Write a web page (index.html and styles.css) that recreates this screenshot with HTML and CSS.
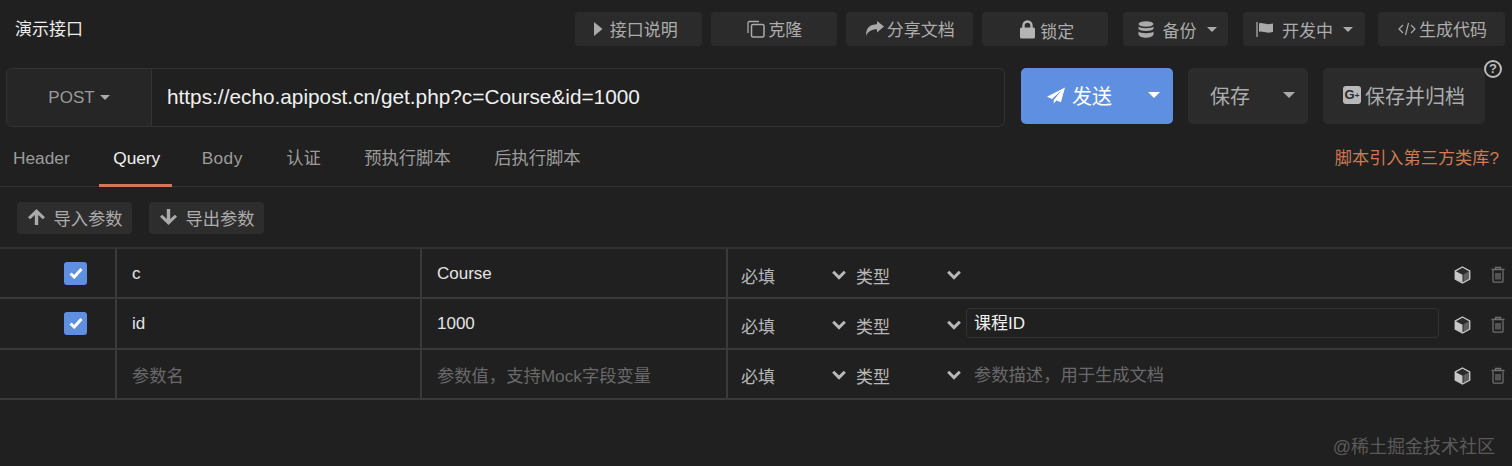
FILE: index.html
```html
<!DOCTYPE html>
<html lang="en">

<head>
    <title>演示接口</title>
    <meta charset="UTF-8">
    <meta name="viewport" content="width=device-width, initial-scale=1">
    <link rel="stylesheet" href="styles.css">
</head>

<body>
    <svg class="defs" width="0" height="0">
        <symbol id="chevron" viewBox="0 0 14 10"><path d="M1.200 1.800 7 7.600 12.800 1.800" fill="none" stroke="currentColor" stroke-width="3"/></symbol>
        <symbol id="cube" viewBox="0 0 17 18"><path d="M8.500 1 15.700 4.800V13.200L8.500 17 1.300 13.200V4.800Z" fill="#2a2a2a" stroke="#c8c8c8" stroke-width="1.400"/><path d="M1.800 5.200 8.500 8.700V16.500L1.800 12.900Z" fill="#c8c8c8"/><path d="M15.200 5.200 9.500 8.200V16L15.200 12.900Z" fill="#8a8a8a" opacity=".55"/></symbol>
        <symbol id="trash" viewBox="0 0 14 17"><path d="M2 4.500V15a1.200 1.200 0 0 0 1.200 1.200h7.600A1.200 1.200 0 0 0 12 15V4.500M.5 3.500h13M4.500 3.500V1.500h5v2M5 7v6.500M7 7v6.500M9 7v6.500" fill="none" stroke="#6e6e6e" stroke-width="1.300"/></symbol>
        <symbol id="check" viewBox="0 0 14 12"><path d="M1.500 6.500 5.200 10 12.500 2" fill="none" stroke="#fff" stroke-width="3"/></symbol>
    </svg>

    <header class="topbar">
        <div class="title">演示接口</div>
        <div class="actions">
            <button class="btn btn-top first">
                <svg class="icon" width="9" height="14" viewBox="0 0 9 14"><path d="M0 0 8.500 7 0 14Z" fill="#aaa"/></svg>
                接口说明
            </button>
            <button class="btn btn-top tight">
                <svg class="icon" width="18" height="18" viewBox="0 0 18 18"><path d="M12 1.500H2.500A1.500 1.500 0 0 0 1 3v10" fill="none" stroke="#aaa" stroke-width="1.300"/><rect x="4.500" y="4.500" width="12.500" height="12.500" rx="1.500" fill="none" stroke="#aaa" stroke-width="1.500"/></svg>
                克隆
            </button>
            <button class="btn btn-top tight">
                <svg class="icon" width="18" height="15" viewBox="0 0 18 15"><path d="M18 5.500 11 0V3.200C4 3.200 0 6.500 0 15 2 10.500 5.500 8.300 11 8.300V11.500Z" fill="#aaa"/></svg>
                分享文档
            </button>
            <button class="btn btn-top lock">
                <svg class="icon" width="15" height="19" viewBox="0 0 15 19"><path d="M3.500 8V5.500a4 4 0 0 1 8 0V8" fill="none" stroke="#b4b4b4" stroke-width="2.400"/><rect y="7.500" width="15" height="11" rx="1.500" fill="#b4b4b4"/></svg>
                <span class="low">锁定</span>
            </button>
            <button class="btn btn-menu spaced">
                <svg class="icon" width="16" height="17" viewBox="0 0 16 17"><ellipse cx="8" cy="3" rx="7.500" ry="2.800" fill="#aaa"/><path d="M.5 5.500C2 7.800 14 7.800 15.500 5.500V8C14 10.500 2 10.500.5 8ZM.5 10.500C2 12.800 14 12.800 15.500 10.500V13.500C14 17.800 2 17.800.5 13.500Z" fill="#aaa"/></svg>
                <span class="menu-label">备份</span>
                <i class="caret"></i>
            </button>
            <button class="btn btn-menu wide spaced">
                <svg class="icon" width="17" height="15" viewBox="0 0 17 15"><path d="M1 0V15" stroke="#aaa" stroke-width="1.300"/><path d="M3 1.500C6.500 0 9 3.500 17 1.500V10C9 12 6.500 8.500 3 10Z" fill="#aaa"/></svg>
                <span class="menu-label">开发中</span>
                <i class="caret"></i>
            </button>
            <button class="btn btn-top tight code">
                <svg class="icon" width="18" height="14" viewBox="0 0 18 14"><path d="M5 3 1 7l4 4M13 3l4 4-4 4M10.500 1 7.500 13" fill="none" stroke="#aaa" stroke-width="1.200"/></svg>
                生成代码
            </button>
        </div>
    </header>

    <section class="request">
        <div class="url-box">
            <div class="method">POST <i class="caret"></i></div>
            <div class="url">https://echo.apipost.cn/get.php?c=Course&amp;id=1000</div>
        </div>
        <button class="btn-big send">
            <svg width="18" height="17" viewBox="0 0 20 18"><path d="M20 0 0 10.500 5.500 12.800 16 3.500 7.500 14V18L10.500 14.500 15.500 16.500Z" fill="#fff"/></svg>
            <span class="send-label">发送</span>
            <i class="caret caret-big white"></i>
        </button>
        <button class="btn-big save">
            <span>保存</span>
            <i class="caret caret-big"></i>
        </button>
        <button class="btn-big archive">
            <span class="gplus">G<small>+</small></span>
            保存并归档
        </button>
        <span class="help">?</span>
    </section>

    <nav class="tabs">
        <div class="tab-list">
            <a class="tab">Header</a>
            <a class="tab active">Query</a>
            <a class="tab tab-body">Body</a>
            <a class="tab">认证</a>
            <a class="tab">预执行脚本</a>
            <a class="tab">后执行脚本</a>
        </div>
        <a class="script-link">脚本引入第三方类库?</a>
    </nav>

    <div class="tools">
        <button class="btn btn-tool">
            <svg width="17" height="16" viewBox="0 0 17 16"><path d="M8.500 0 17 8.300 14.800 10.300 10.200 6V16H6.800V6L2.200 10.300 0 8.300Z" fill="#aaa"/></svg>
            导入参数
        </button>
        <button class="btn btn-tool">
            <svg width="17" height="16" viewBox="0 0 17 16"><path d="M8.500 16 17 7.700 14.800 5.700 10.200 10V0H6.800V10L2.200 5.700 0 7.700Z" fill="#aaa"/></svg>
            导出参数
        </button>
    </div>

    <div class="params">
        <div class="row">
            <div class="cell cell-check"><span class="checkbox"><svg width="14" height="12"><use href="#check"/></svg></span></div>
            <div class="cell cell-text">c</div>
            <div class="cell cell-text">Course</div>
            <div class="cell cell-meta">
                <span class="select must">必填<svg width="14" height="10"><use href="#chevron"/></svg></span>
                <span class="select kind">类型<svg width="14" height="10"><use href="#chevron"/></svg></span>
                <span class="desc"></span>
                <svg class="cube" width="17" height="18"><use href="#cube"/></svg>
                <svg class="trash" width="14" height="17"><use href="#trash"/></svg>
            </div>
        </div>
        <div class="row">
            <div class="cell cell-check"><span class="checkbox"><svg width="14" height="12"><use href="#check"/></svg></span></div>
            <div class="cell cell-text">id</div>
            <div class="cell cell-text">1000</div>
            <div class="cell cell-meta">
                <span class="select must">必填<svg width="14" height="10"><use href="#chevron"/></svg></span>
                <span class="select kind">类型<svg width="14" height="10"><use href="#chevron"/></svg></span>
                <span class="desc focused">课程ID</span>
                <svg class="cube" width="17" height="18"><use href="#cube"/></svg>
                <svg class="trash" width="14" height="17"><use href="#trash"/></svg>
            </div>
        </div>
        <div class="row">
            <div class="cell cell-check"></div>
            <div class="cell cell-text placeholder">参数名</div>
            <div class="cell cell-text placeholder">参数值，支持Mock字段变量</div>
            <div class="cell cell-meta">
                <span class="select must">必填<svg width="14" height="10"><use href="#chevron"/></svg></span>
                <span class="select kind">类型<svg width="14" height="10"><use href="#chevron"/></svg></span>
                <span class="desc placeholder">参数描述，用于生成文档</span>
                <svg class="cube" width="17" height="18"><use href="#cube"/></svg>
                <svg class="trash" width="14" height="17"><use href="#trash"/></svg>
            </div>
        </div>
    </div>

    <div class="watermark">@稀土掘金技术社区</div>
</body>

</html>
```

FILE: styles.css
```css
* {
    margin: 0;
    padding: 0;
    box-sizing: border-box;
}

body {
    position: relative;
    height: 466px;
    overflow: hidden;
    background: #202020;
    color: #e8e8e8;
    font-family: "Liberation Sans", "Noto Sans CJK SC", sans-serif;
    font-size: 17px;
}

button {
    border: 0;
    font-family: inherit;
    font-size: inherit;
}

.defs {
    position: absolute;
}

.caret {
    display: inline-block;
    width: 0;
    height: 0;
    border-left: 5.500px solid transparent;
    border-right: 5.500px solid transparent;
    border-top: 5px solid #aaa;
}

.caret-big {
    border-left-width: 6px;
    border-right-width: 6px;
    border-top-width: 6px;
}

.caret.white {
    border-top-color: #fff;
}

/* top bar */
.topbar {
    display: flex;
    justify-content: space-between;
    align-items: flex-start;
    height: 68px;
    padding: 12px 7px 0 15px;
}

.title {
    height: 34px;
    line-height: 36px;
    color: #ececec;
}

.actions {
    display: flex;
    gap: 9px;
}

.btn {
    display: flex;
    align-items: center;
    justify-content: center;
    height: 34px;
    border-radius: 4px;
    background: #2b2b2b;
    color: #acacac;
}

.btn-top {
    width: 126.500px;
    gap: 8px;
    padding-bottom: 1px;
}

.btn-top.first {
    gap: 7px;
    padding-right: 5px;
}

.btn-top.tight {
    gap: 3px;
    padding-left: 2px;
}

.btn-top.lock {
    gap: 5px;
    padding-bottom: 0;
    padding-left: 5px;
}

.btn-top.code {
    width: 127px;
    margin-left: 4px;
    padding-left: 2px;
}

.low {
    padding-top: 3px;
}

.btn-menu {
    width: 105px;
    gap: 9px;
    padding-left: 3px;
}

.btn-menu.wide {
    width: 122px;
    padding-left: 1px;
}

.btn-menu.spaced {
    margin-left: 6px;
}

.menu-label {
    margin-right: 1px;
}

/* url row */
.request {
    display: flex;
    align-items: flex-start;
    padding-left: 6px;
    height: 59px;
}

.url-box {
    display: flex;
    width: 999px;
    height: 59px;
    border: 1px solid #333;
    border-radius: 6px;
    overflow: hidden;
}

.method {
    display: flex;
    align-items: center;
    justify-content: center;
    gap: 5px;
    width: 145px;
    background: #262626;
    border-right: 1px solid #333;
    color: #9a9a9a;
}

.url {
    padding-left: 15px;
    line-height: 56px;
    font-size: 20.800px;
    color: #f0f0f0;
}

.btn-big {
    display: flex;
    align-items: center;
    height: 56px;
    padding-bottom: 2px;
    border-radius: 5px;
    background: #2b2b2b;
    color: #acacac;
    font-size: 20px;
}

.send {
    width: 152px;
    margin-left: 16px;
    padding: 0 13px 2px 26px;
    background: #5f8fe0;
    color: #fff;
}

.send-label {
    margin-left: 7px;
    margin-right: auto;
}

.save {
    justify-content: space-between;
    width: 120px;
    margin-left: 15px;
    padding: 0 13px 2px 22px;
}

.archive {
    justify-content: center;
    gap: 4px;
    width: 162px;
    margin-left: 15px;
}

.gplus {
    width: 18px;
    height: 18px;
    border-radius: 3px;
    background: #b8b8b8;
    color: #2b2b2b;
    font-size: 13px;
    font-weight: bold;
    line-height: 18px;
}

.gplus small {
    font-size: 8px;
    vertical-align: 1px;
}

.help {
    position: absolute;
    top: 60px;
    left: 1484px;
    width: 18px;
    height: 18px;
    border: 2px solid #bbb;
    border-radius: 50%;
    color: #bbb;
    font-size: 13px;
    font-weight: bold;
    line-height: 14px;
    text-align: center;
}

/* tabs */
.tabs {
    display: flex;
    justify-content: space-between;
    align-items: stretch;
    height: 60px;
    padding-right: 13px;
    border-bottom: 1px solid #333;
}

.tab-list {
    display: flex;
    gap: 15.500px;
    margin-left: -1px;
    font-size: 17.300px;
}

.tab {
    padding: 0 14px;
    line-height: 62px;
    color: #9c9c9c;
}

.tab-body {
    letter-spacing: .4px;
}

.tab.active {
    width: 73px;
    height: 60px;
    border-bottom: 3px solid #cf7a52;
    color: #f0f0f0;
}

.script-link {
    line-height: 63px;
    font-size: 17.200px;
    color: #cf7a52;
}

/* params */
.tools {
    display: flex;
    gap: 17px;
    height: 60px;
    padding: 15px 0 0 17px;
}

.btn-tool {
    width: 115px;
    height: 32px;
    gap: 8px;
    padding: 0 0 2px 2px;
    background: #2d2d2d;
    font-size: 17.300px;
}

.params {
    border-top: 2px solid #333;
}

.row {
    display: grid;
    grid-template-columns: 117px 305px 306px 1fr;
    height: 50.300px;
    border-bottom: 2px solid #3a3a3a;
}

.cell {
    display: flex;
    align-items: center;
    border-right: 2px solid #3a3a3a;
    font-size: 17px;
}

.cell-check {
    justify-content: flex-end;
    padding-right: 28px;
}

.checkbox {
    display: flex;
    align-items: center;
    justify-content: center;
    width: 23px;
    height: 23px;
    border-radius: 3px;
    background: #5f8fe0;
}

.cell-text {
    padding: 2px 0 0 15px;
    color: #e4e4e4;
}

.cell-meta {
    border-right: 0;
    padding-left: 13px;
}

.select {
    display: flex;
    align-items: center;
    justify-content: space-between;
    height: 100%;
    padding-top: 4px;
    color: #b8b8b8;
}

.select svg {
    margin-top: -1px;
    color: #b8b8b8;
}

.must {
    width: 115px;
    padding-right: 10px;
}

.kind {
    width: 110px;
    padding-right: 5px;
}

.desc {
    width: 473px;
    height: 30px;
    padding-left: 7px;
    border: 1px solid transparent;
    border-radius: 4px;
    line-height: 30px;
}

.desc.focused {
    border-color: #333;
    color: #f0f0f0;
}

.placeholder {
    color: #696969;
    font-size: 17.300px;
}

.cube {
    margin: 4px 0 0 15px;
}

.trash {
    margin: 3px 0 0 20px;
}

.watermark {
    position: absolute;
    right: 17px;
    bottom: 8px;
    font-size: 18px;
    color: #5a5a5a;
}
```
